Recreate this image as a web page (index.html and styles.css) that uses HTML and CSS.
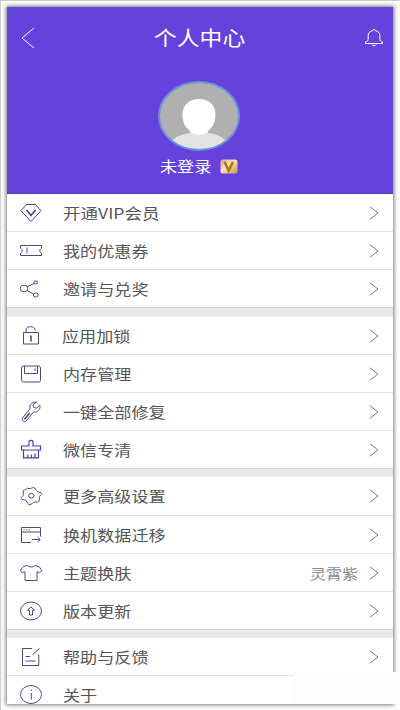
FILE: index.html
```html
<!DOCTYPE html>
<html lang="zh-CN">
<head>
<meta charset="utf-8">
<title>个人中心</title>
<link rel="stylesheet" href="styles.css">
</head>
<body>
<main class="phone">
  <header class="header">
    <div class="bar">
      <svg class="back" width="14" height="22" viewBox="0 0 14 22"><path d="M13 1 1 11l12 10"/></svg>
      <h1 class="title"><span class="wide">个人中心</span></h1>
      <svg class="bell" width="20" height="20" viewBox="0 0 20 20"><path d="M1.500 15.500h17v-1.500C16.500 13.500 15.800 12.500 15.800 10V7.500C15.800 4.500 13.500 3 11.300 2.600 11 .9 9 .9 8.700 2.600 6.500 3 4.200 4.500 4.200 7.500V10c0 2.500-.7 3.500-2.700 4zM8 16.500c.3 1.600 3.700 1.600 4 0"/></svg>
    </div>
    <svg class="avatar" width="84" height="72" viewBox="0 0 84 72">
      <defs><clipPath id="face"><ellipse cx="42" cy="36" rx="39.500" ry="33.500"/></clipPath></defs>
      <g clip-path="url(#face)">
        <path fill="#b0b0b0" d="M0 0h84v72H0z"/>
        <path fill="#e3e3e5" d="M14 62c5-6 11-8 19-9v-4h18v4c8 1 14 3 19 9v10H14z"/>
        <path fill="#fff" d="M42 19c10.500 0 16.500 6.500 16.500 16 0 8-3.500 13-7.500 16v1c-5 3.500-13 3.500-18 0v-1c-4-3-7.500-8-7.500-16 0-9.500 6-16 16.500-16z"/>
      </g>
      <ellipse class="ring" cx="42" cy="36" rx="40" ry="34"/>
    </svg>
    <div class="user">
      <span class="name"><span class="wide">未登录</span></span>
      <svg class="vip" width="18" height="15" viewBox="0 0 18 15">
        <defs><linearGradient id="gold" x1="0" y1="0" x2="1" y2="1"><stop offset="0" stop-color="#dba58f"/><stop offset=".45" stop-color="#f8e3bd"/><stop offset="1" stop-color="#cf8d45"/></linearGradient></defs>
        <rect x=".5" y=".5" width="17" height="14" rx="2" fill="url(#gold)"/>
        <path d="m4.500 2.800 4.200 8.700 4.300-8.700" fill="none" stroke="#a87b13" stroke-width="2.600"/>
      </svg>
    </div>
  </header>

  <section class="group">
    <div class="row"><svg class="icon" viewBox="0 0 24 22"><path d="M7.500 2.500h9L22 8.700 12 19.500 2 8.700z"/><path class="strong" d="m7.500 8 4.500 5.500L16.500 8"/></svg><span class="label"><span class="wide vip-label">开通VIP会员</span></span><svg class="arrow" viewBox="0 0 10 14"><path d="m1 .8 8 6.200-8 6.200"/></svg></div>
    <div class="row"><svg class="icon" viewBox="0 0 24 22"><path d="M1.500 5.500h21v2.700c-2.300 1-2.300 4 0 5v2.300h-21v-2.300c2.300-1 2.300-4 0-5zM8 7.500v6"/></svg><span class="label"><span class="wide">我的优惠券</span></span><svg class="arrow" viewBox="0 0 10 14"><path d="m1 .8 8 6.200-8 6.200"/></svg></div>
    <div class="row"><svg class="icon" viewBox="0 0 24 22"><ellipse cx="5" cy="10.500" rx="3.800" ry="3.300"/><ellipse cx="16.800" cy="4.500" rx="1.900" ry="1.600"/><ellipse cx="16.800" cy="17" rx="2.400" ry="2.100"/><path d="m8.500 8.800 6.600-3.400M8 12.400l6.600 3.600"/></svg><span class="label"><span class="wide">邀请与兑奖</span></span><svg class="arrow" viewBox="0 0 10 14"><path d="m1 .8 8 6.200-8 6.200"/></svg></div>
  </section>

  <section class="group">
    <div class="row"><svg class="icon" viewBox="0 0 24 22"><path d="M4.500 7.500h15v11.500h-15zM7 7.300V4.500C7 .8 16 .8 16 4.500v.8"/><path class="strong" d="M12 10.500v6"/></svg><span class="label lock"><span class="wide">应用加锁</span></span><svg class="arrow" viewBox="0 0 10 14"><path d="m1 .8 8 6.200-8 6.200"/></svg></div>
    <div class="row"><svg class="icon" viewBox="0 0 24 22"><path d="M4.500 3h15q2 0 2 2v12.500q0 1.500-2 1.500h-15q-2 0-2-1.500V5q0-2 2-2zM5.500 3v7.500h13V3M16 5.500V8"/></svg><span class="label"><span class="wide">内存管理</span></span><svg class="arrow" viewBox="0 0 10 14"><path d="m1 .8 8 6.200-8 6.200"/></svg></div>
    <div class="row"><svg class="icon" viewBox="0 0 24 22"><path d="M17.500 1.200c-4-.5-7.500 2-6.500 6.500L3.500 17c-1.500 2.500 1.700 5 3.700 3l7.300-9c4 .8 7.500-2.500 6.300-7l-3.300 3.200-3-.8-.5-2.700z"/><path class="strong" d="m5.500 18.500 5.200-6.500"/></svg><span class="label"><span class="wide">一键全部修复</span></span><svg class="arrow" viewBox="0 0 10 14"><path d="m1 .8 8 6.200-8 6.200"/></svg></div>
    <div class="row"><svg class="icon tool" viewBox="0 0 24 22"><path d="M2.500 7H10V3c0-2.300 4-2.300 4 0v4h7.500v4h-19zM4.500 11v7.800h15V11M9 18.500v-3M12.500 18.500v-3M16 18.500v-4"/></svg><span class="label"><span class="wide">微信专清</span></span><svg class="arrow" viewBox="0 0 10 14"><path d="m1 .8 8 6.200-8 6.200"/></svg></div>
  </section>

  <section class="group">
    <div class="row"><svg class="icon" viewBox="0 0 24 22"><path d="M8.500 3.200c1.800 1.200 4.500-.4 6.200-.7 2 .1 2 3.300 4 4.100 1.500.6 3.500.4 3.700 1.900.2 1.400-2.200 2.500-2.200 4.300 0 1.500.8 3-.8 4-1.700.8-3.500-.3-5 .7-1.400 1-3 2.600-4.700 1.900-1.500-.7-1.500-3.400-3-4.100-1.600-.8-4-.2-4.400-1.800-.2-1.700 2.200-2.500 2.200-4.300 0-1.500-1-3 .2-4 1-.7 2.700-.8 3.800-2z"/><ellipse cx="12.300" cy="10.700" rx="2.700" ry="2.300"/></svg><span class="label"><span class="wide">更多高级设置</span></span><svg class="arrow" viewBox="0 0 10 14"><path d="m1 .8 8 6.200-8 6.200"/></svg></div>
    <div class="row"><svg class="icon" viewBox="0 0 24 22"><path d="M12 18.500H2.500v-15h19v9M2.500 8h19M4.500 5.800h1.200M7 5.800h1.200M9.500 5.800h1.200M13 15.500h8M18.500 13l2.700 2.500-2.700 2.500"/></svg><span class="label"><span class="wide">换机数据迁移</span></span><svg class="arrow" viewBox="0 0 10 14"><path d="m1 .8 8 6.200-8 6.200"/></svg></div>
    <div class="row"><svg class="icon" viewBox="0 0 24 22"><path d="M8.500 3.500c1.500 2 6 2 7.500 0l4 1 3 4.200-2.500 2-2.500-1v8.800H6V9.700l-2.500 1-2.300-2L4.300 4.500z"/></svg><span class="label"><span class="wide">主题换肤</span></span><span class="value"><span class="wide">灵霄紫</span></span><svg class="arrow" viewBox="0 0 10 14"><path d="m1 .8 8 6.200-8 6.200"/></svg></div>
    <div class="row"><svg class="icon" viewBox="0 0 24 22"><ellipse cx="12" cy="11" rx="10.500" ry="9"/><path d="m12 7-3.500 3.300h2V15h3v-4.700h2z"/></svg><span class="label"><span class="wide">版本更新</span></span><svg class="arrow" viewBox="0 0 10 14"><path d="m1 .8 8 6.200-8 6.200"/></svg></div>
  </section>

  <section class="group">
    <div class="row"><svg class="icon" viewBox="0 0 24 22"><path d="M13 2.500H3.500v17h16.300V8.500M13.500 8.700 20.500 2.500M6.500 10.500H11M6.500 15h10"/></svg><span class="label"><span class="wide">帮助与反馈</span></span><svg class="arrow" viewBox="0 0 10 14"><path d="m1 .8 8 6.200-8 6.200"/></svg></div>
    <div class="row"><svg class="icon" viewBox="0 0 24 22"><ellipse cx="12" cy="10.500" rx="10.500" ry="9"/><path d="M12.300 9V15.500M12.300 5.500v1.500"/></svg><span class="label"><span class="wide">关于</span></span></div>
  </section>
</main>
<div class="patch"></div>
</body>
</html>
```

FILE: styles.css
```css
* { box-sizing: border-box; }

body {
  margin: 0;
  width: 400px;
  height: 710px;
  padding: 6px 7px 6px 6px;
  overflow: hidden;
  border-top: 1px solid #c9c8cc;
  border-left: 1px solid #cfcfcf;
  background: #fdfdfd;
  font-family: "Noto Sans CJK SC", sans-serif;
  font-weight: 400;
}

.phone {
  display: flex;
  flex-direction: column;
  gap: 8.400px;
  width: 386px;
  height: 697px;
  overflow: hidden;
  background: #e9e9e9;
  box-shadow: 0 0 4px 1px #777;
}

.header {
  display: flex;
  flex-direction: column;
  align-items: center;
  flex: none;
  height: 187px;
  margin-bottom: -8.400px;
  background: #6642dc;
  border-bottom: 1px solid #5536b8;
  color: #fff;
}

.bar {
  display: flex;
  align-items: center;
  width: 100%;
  height: 62px;
  padding: 0 9px 0 14px;
}

.bar svg, .icon, .arrow {
  fill: none;
  stroke: #fff;
  stroke-width: 1;
}

.title {
  width: 90px;
  margin: 0 auto 0 119px;
  font-size: 20px;
  line-height: 30px;
  font-weight: 400;
}

.wide {
  display: inline-block;
  white-space: nowrap;
  transform: scaleX(1.14);
  transform-origin: left;
}

.wide.vip-label { transform: scaleX(1.17); }

.avatar { margin: 11px 0 0 -3px; }

.ring {
  fill: none;
  stroke: #6c93d8;
  stroke-width: 2;
}

.user {
  display: flex;
  align-items: center;
  gap: 8px;
  height: 28px;
  margin-left: -3px;
}

.name {
  width: 52px;
  font-size: 15px;
  line-height: 28px;
}

.group {
  flex: none;
  background: #fff;
}

.row {
  display: flex;
  align-items: center;
  height: 38.100px;
  padding: 1px 14px 0 12px;
  border-bottom: 1px solid #e2e2e2;
}

.row:last-child { border-bottom-color: #d6d6d6; }

.icon {
  width: 24px;
  height: 22px;
  stroke: #51458c;
}

.icon.tool {
  stroke: #5539a8;
  stroke-width: 1.200;
}

.icon .strong { stroke-width: 1.600; }

.label {
  flex: 1;
  margin-left: 20px;
  font-size: 15px;
  line-height: 24px;
  color: #555;
}

.label.lock { margin-left: 19px; }

.value {
  width: 47px;
  margin-right: 12px;
  font-size: 14px;
  color: #8a8a8a;
}

.arrow {
  width: 10px;
  height: 14px;
  stroke: #777;
}

/* light strip over the lower right corner of the frame */
.patch {
  position: absolute;
  left: 294px;
  top: 672px;
  width: 106px;
  height: 32px;
  background: #fdfdfd;
}
```
